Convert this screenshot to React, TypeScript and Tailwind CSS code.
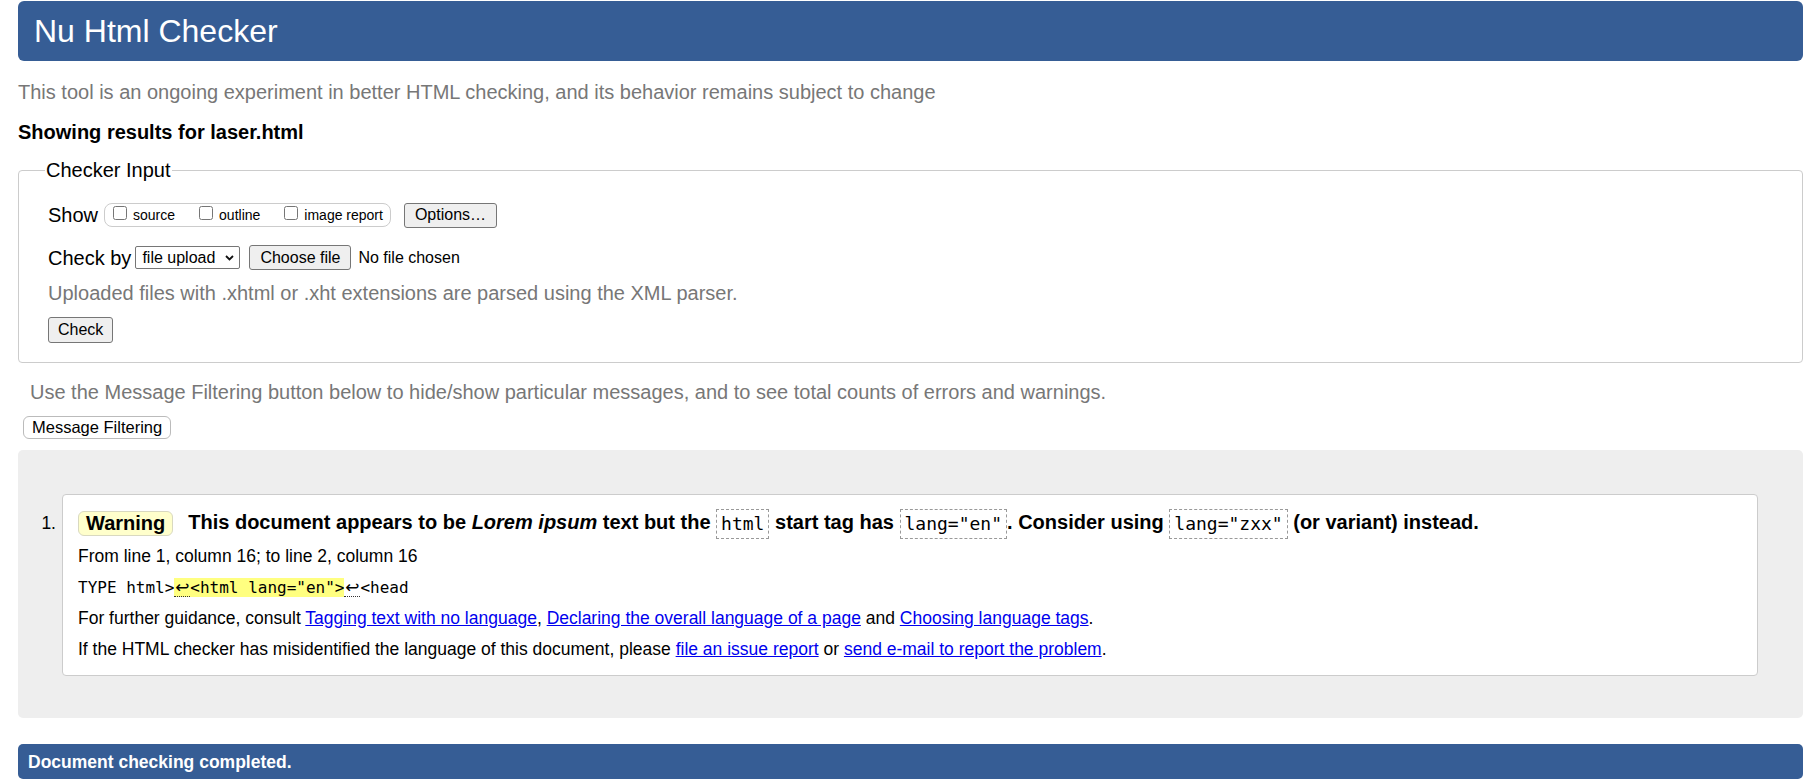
const mono = "font-['DejaVu_Sans_Mono','Liberation_Mono',monospace]";

function Code({ children }: { children: string }) {
  return (
    <code
      className={`${mono} inline-block align-middle border border-dashed border-[#999999] px-[4px] text-[18px] leading-[28px] font-normal`}
    >
      {children}
    </code>
  );
}

function Btn({ children, className = '' }: { children: string; className?: string }) {
  return (
    <button
      className={`h-[25px] px-[9px] bg-[#efefef] border border-[#767676] rounded-[3px] text-[16px] leading-none text-black ${className}`}
    >
      {children}
    </button>
  );
}

function Box({ label }: { label: string }) {
  return (
    <label className="flex items-center mr-[24px] last:mr-0">
      <input type="checkbox" className="w-[14px] h-[14px] m-0 mb-[5px] mr-[6px]" />
      <span className="text-[14px]">{label}</span>
    </label>
  );
}

function Link({ children }: { children: string }) {
  return (
    <a href="#" className="text-[#0000ee] underline">
      {children}
    </a>
  );
}

function Ret() {
  return (
    <span className="inline-block w-[16px] text-center border-b border-dotted border-[#333333] font-['DejaVu_Sans',sans-serif] text-[17px] leading-[18px]">
      ↩
    </span>
  );
}

export default function App() {
  return (
    <div className="min-h-screen bg-white text-black font-['Liberation_Sans',Arial,sans-serif] text-[20px]">
      <div className="ml-[18px] w-[1785px] pt-px pb-[4px]">
        {/* Title */}
        <h1 className="h-[60px] flex items-center pl-[16px] rounded-[6px] bg-[#365d95] text-white text-[32px]">
          Nu Html Checker
        </h1>

        <p className="mt-[20px] leading-[23px] text-[#777777]">
          This tool is an ongoing experiment in better HTML checking, and its behavior remains subject to change
        </p>
        <p className="mt-[17px] leading-[23px] font-bold">Showing results for laser.html</p>

        {/* Checker input */}
        <fieldset className="mt-[15px] border border-[#cccccc] rounded-[4px] px-[29px] pb-[19px]">
          <legend className="-ml-[3px] px-[1px] leading-[23px]">Checker Input</legend>
          <div className="pt-[20px]">
            <div className="flex items-center h-[26px]">
              <span className="mr-[6px]">Show</span>
              <div className="flex items-center h-[24px] border border-[#cccccc] rounded-[8px] pl-[8px] pr-[7px]">
                <Box label="source" />
                <Box label="outline" />
                <Box label="image report" />
              </div>
              <Btn className="ml-[13px] px-[10px]">Options…</Btn>
            </div>

            <div className="flex items-center h-[25px] mt-[17px]">
              <span className="mr-[4px]">Check by</span>
              <div className="flex items-center justify-between h-[23px] w-[105px] border border-[#767676] rounded-[2px] pl-[6px] pr-[5px] text-[16px]">
                <span>file upload</span>
                <svg width="9" height="6" viewBox="0 0 9 6" className="mt-[1px]">
                  <path d="M1 1 L4.5 4.5 L8 1" fill="none" stroke="#111" strokeWidth="1.8" />
                </svg>
              </div>
              <Btn className="ml-[9px] px-[10px]">Choose file</Btn>
              <span className="ml-[7px] text-[16px]">No file chosen</span>
            </div>

            <p className="mt-[12px] leading-[23px] text-[#777777]">
              Uploaded files with .xhtml or .xht extensions are parsed using the XML parser.
            </p>

            <Btn className="mt-[12px] h-[26px]">Check</Btn>
          </div>
        </fieldset>

        <p className="mt-[18px] ml-[12px] leading-[23px] text-[#777777]">
          Use the Message Filtering button below to hide/show particular messages, and to see total counts of errors and warnings.
        </p>
        <button className="mt-[12px] ml-[5px] h-[23px] px-[8px] bg-white border border-[#bbbbbb] rounded-[6px] text-[16.5px] leading-none">
          Message Filtering
        </button>

        {/* Results */}
        <div className="mt-[9px] flex rounded-[5px] bg-[#eeeeee] pt-[44px] pb-[42px] pr-[45px]">
          <span className="w-[44px] shrink-0 pr-[6px] text-right text-[17.5px] leading-[20px] mt-[19px]">1.</span>
          <div className="flex-1 bg-white border border-[#cccccc] rounded-[4px] pl-[15px] pt-[13px] pb-[10px]">
            <div className="flex items-center h-[30px] whitespace-nowrap">
              <span className="inline-flex items-center h-[25px] px-[7px] bg-[#ffffcc] border border-[#d9d9c0] rounded-[6px] font-bold">
                Warning
              </span>
              <span className="ml-[15px] font-bold leading-[30px]">
                This document appears to be <i>Lorem ipsum</i> text but the <Code>html</Code> start tag has{' '}
                <Code>lang="en"</Code>. Consider using <Code>lang="zxx"</Code> (or variant) instead.
              </span>
            </div>

            <div className="text-[17.5px] leading-[31px]">
              <p className="mt-[3px]">From line 1, column 16; to line 2, column 16</p>
              <p className={`${mono} text-[16px] whitespace-pre`}>
                TYPE html&gt;
                <mark className="bg-[#ffff80] text-black">
                  <Ret />&lt;html lang="en"&gt;
                </mark>
                <Ret />&lt;head
              </p>
              <p>
                For further guidance, consult <Link>Tagging text with no language</Link>,{' '}
                <Link>Declaring the overall language of a page</Link> and <Link>Choosing language tags</Link>.
              </p>
              <p>
                If the HTML checker has misidentified the language of this document, please{' '}
                <Link>file an issue report</Link> or <Link>send e-mail to report the problem</Link>.
              </p>
            </div>
          </div>
        </div>

        <div className="mt-[26px] h-[35px] flex items-center pl-[10px] rounded-[5px] bg-[#365d95] text-white text-[17.5px] font-bold">
          Document checking completed.
        </div>
      </div>
    </div>
  );
}
